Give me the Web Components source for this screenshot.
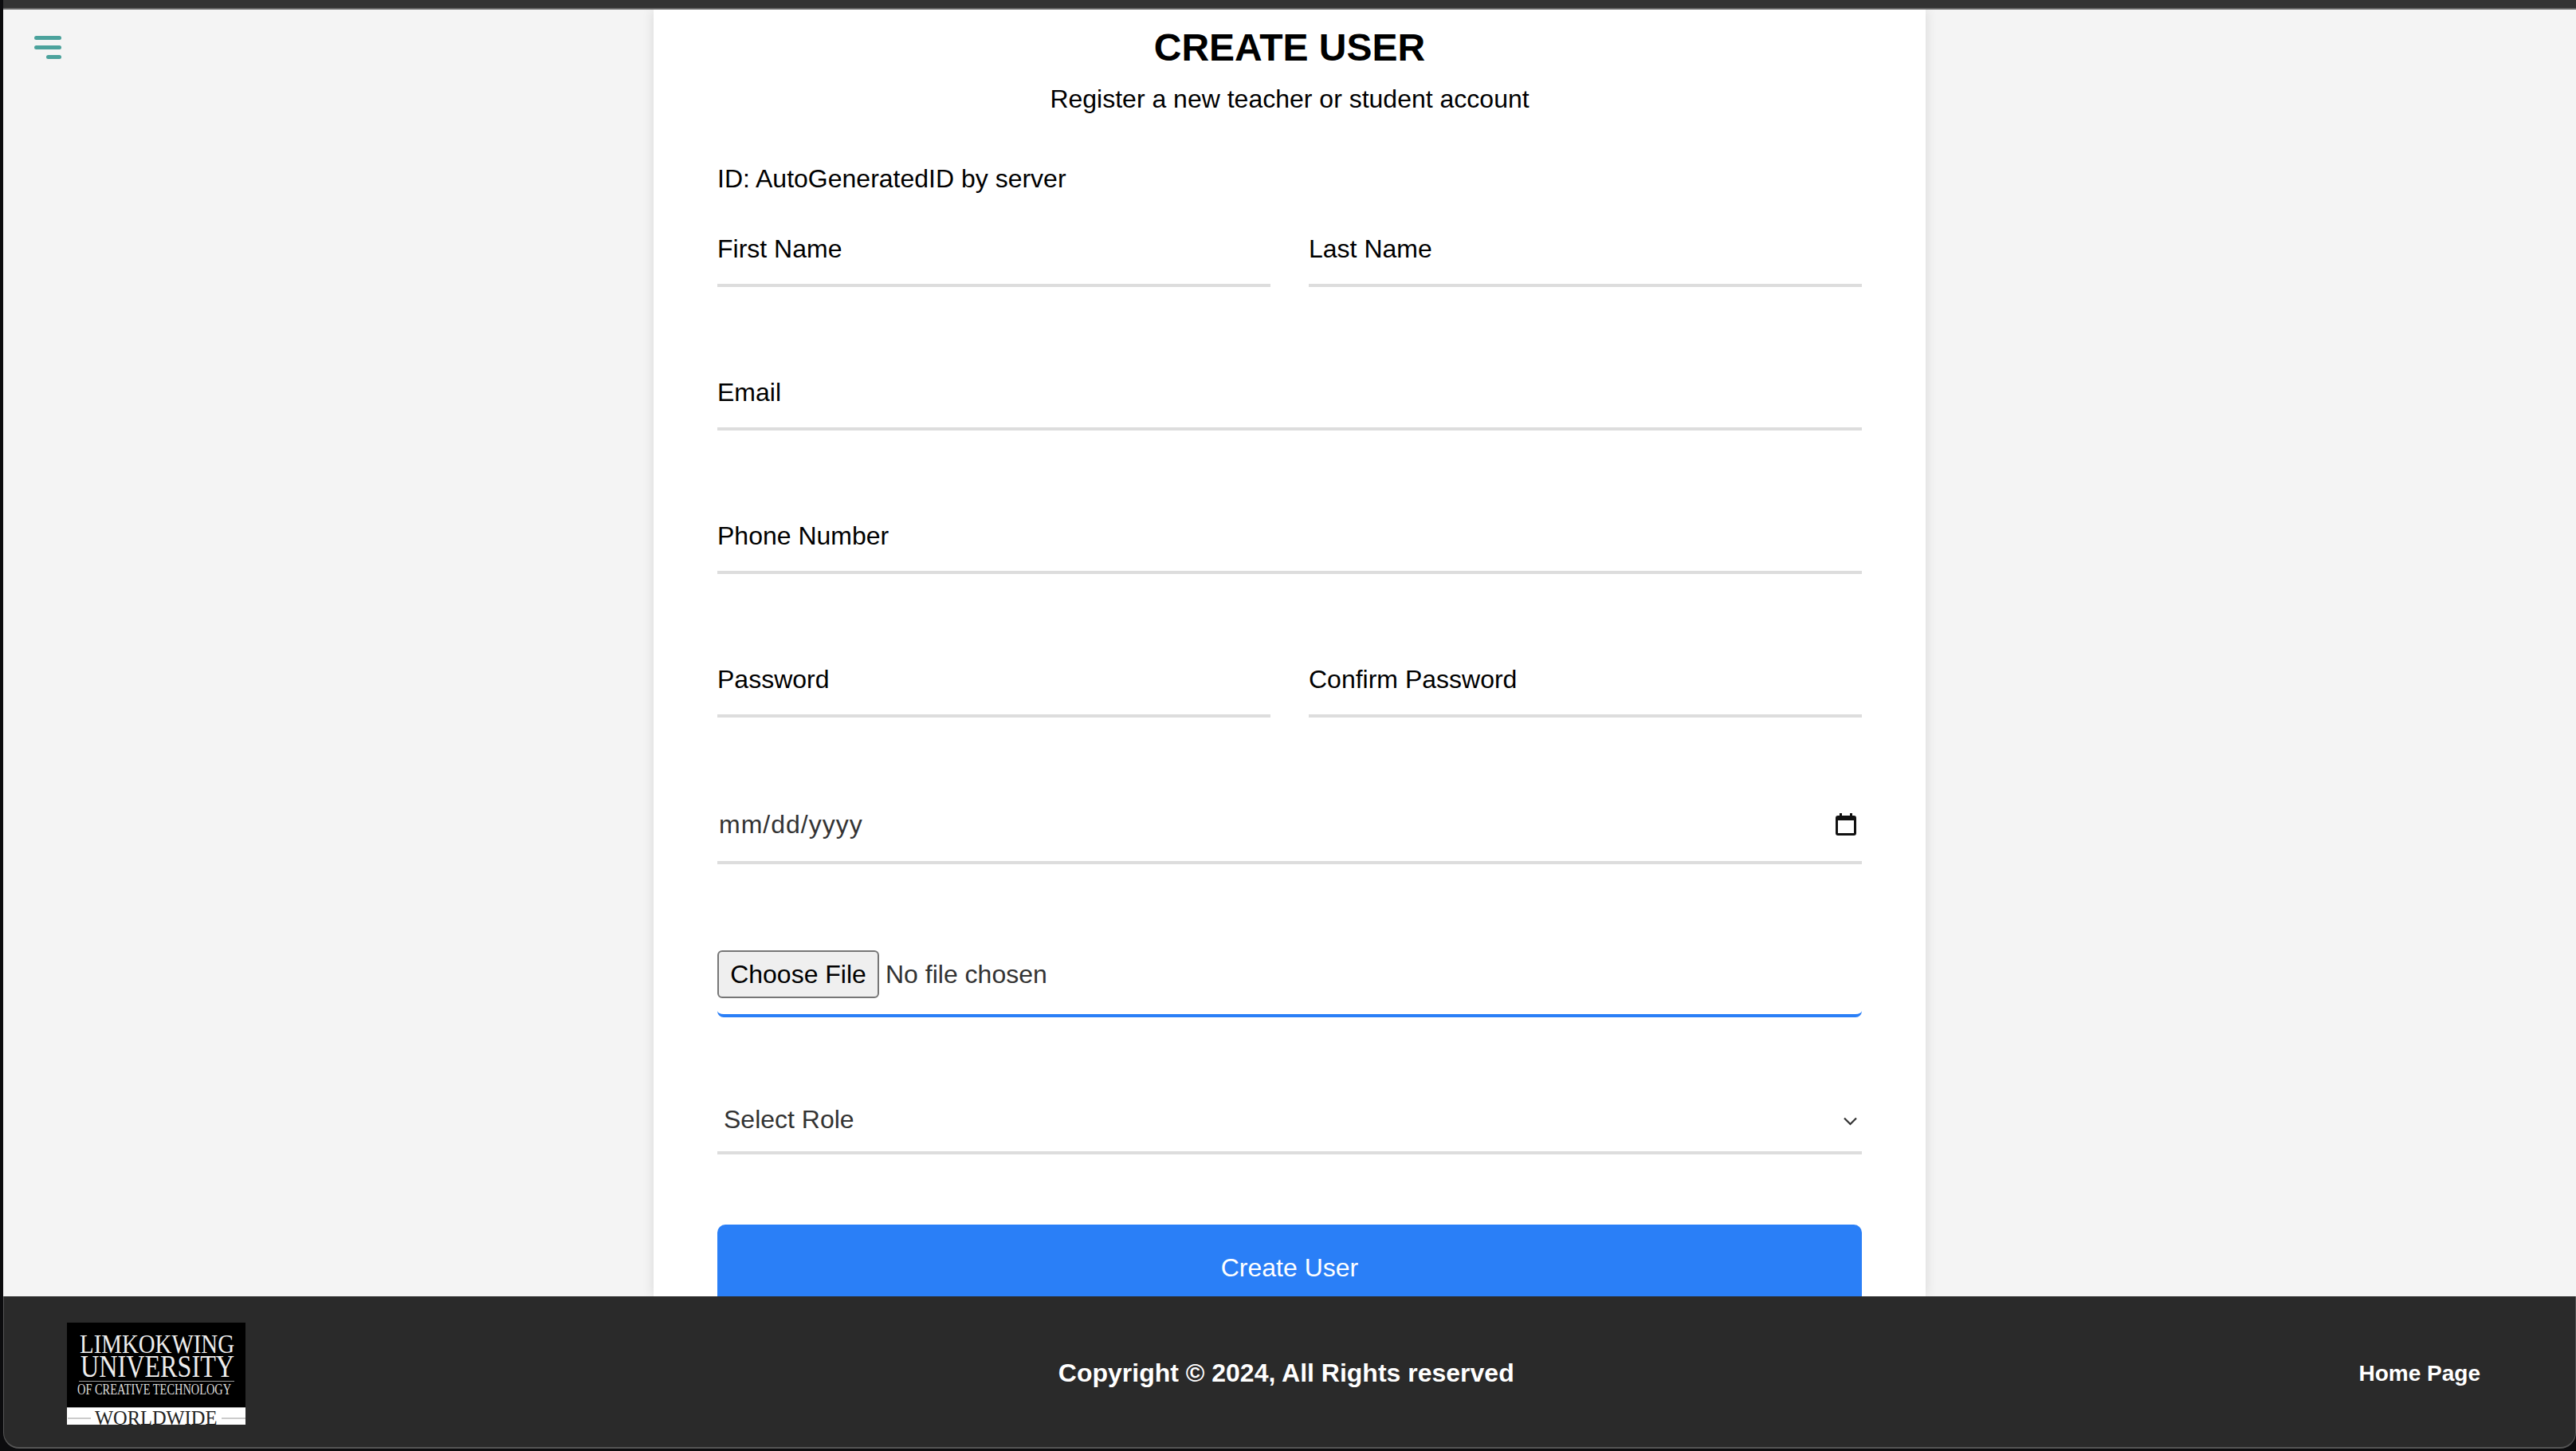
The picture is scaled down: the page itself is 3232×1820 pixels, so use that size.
<!DOCTYPE html>
<html>
<head>
<meta charset="utf-8">
<title>Create User</title>
<style>
html, body { margin: 0; height: 100%; background: #0c0c0e; }
body { font-family: "Liberation Sans", Arial, sans-serif; overflow: hidden; }
</style>
</head>
<body>
<app-shell>
  <menu-button slot="menu"></menu-button>
  <create-user-form>
    <form-row><text-field>First Name</text-field><text-field>Last Name</text-field></form-row>
    <form-row><text-field>Email</text-field></form-row>
    <form-row><text-field>Phone Number</text-field></form-row>
    <form-row><text-field>Password</text-field><text-field>Confirm Password</text-field></form-row>
    <form-row><date-field></date-field></form-row>
    <form-row><file-field></file-field></form-row>
    <form-row><select-field>Select Role</select-field></form-row>
  </create-user-form>
  <site-footer slot="footer"></site-footer>
</app-shell>

<script>
function component(name, css, html) {
  customElements.define(name, class extends HTMLElement {
    constructor() {
      super();
      this.attachShadow({ mode: 'open' });
      this.shadowRoot.innerHTML = '<style>' + css + '</style>' + html;
    }
  });
}

component('app-shell', `
  :host { display: flex; flex-direction: column; height: 1820px; box-sizing: border-box; padding: 0 0 3px 4px; }
  .bar { height: 10px; background: #333; flex: none; }
  .line { height: 2px; background: #666; flex: none; }
  main { flex: 1; min-height: 0; display: flex; justify-content: center; background: #f4f4f4; overflow: hidden; position: relative; }
  .menu { position: absolute; left: 39px; top: 33px; }
  .foot { flex: none; }
`, `
  <div class="bar"></div>
  <div class="line"></div>
  <main><div class="menu"><slot name="menu"></slot></div><slot></slot></main>
  <div class="foot"><slot name="footer"></slot></div>
`);

component('menu-button', `
  :host { display: block; width: 34px; height: 29px; }
  svg { display: block; }
`, `
  <svg width="34" height="29" viewBox="0 0 34 29" fill="#4ba29c">
    <rect x="0" y="0" width="34" height="5" rx="2.5"/>
    <rect x="0" y="12" width="34" height="5" rx="2.5"/>
    <rect x="15" y="24" width="19" height="5" rx="2.5"/>
  </svg>
`);

component('create-user-form', `
  :host { display: block; width: 1596px; flex: none; box-sizing: border-box; padding: 20px 80px 0; background: #fff; color: #000; box-shadow: 0 0 14px rgba(0,0,0,.12); }
  h1 { margin: 0; font-size: 48px; line-height: 56px; font-weight: 700; text-align: center; }
  p { margin: 17px 0 0; font-size: 32px; line-height: 38px; text-align: center; }
  .id { margin: 62px 0 0; text-align: left; }
  .fields { display: flex; flex-direction: column; margin-top: 25px; }
  .submit { display: block; margin-top: 88px; height: 108px; background: #2a7ff7; color: #fff; font-size: 32px; line-height: 108px; text-align: center; border-radius: 10px; }
`, `
  <h1>CREATE USER</h1>
  <p>Register a new teacher or student account</p>
  <p class="id">ID: AutoGeneratedID by server</p>
  <div class="fields"><slot></slot></div>
  <div class="submit">Create User</div>
`);

component('form-row', `
  :host { display: flex; gap: 48px; margin-bottom: 88px; }
  :host(:last-child) { margin-bottom: 0; }
`, `<slot></slot>`);

component('text-field', `
  :host { display: block; flex: 1; min-width: 0; height: 92px; box-sizing: border-box; padding-top: 24px; border-bottom: 4px solid #ddd; font-size: 32px; line-height: 40px; color: #000; }
`, `<slot></slot>`);

component('date-field', `
  :host { display: flex; flex: 1; align-items: center; justify-content: space-between; height: 96px; box-sizing: border-box; padding: 12px 7px 12px 2px; border-bottom: 4px solid #ddd; font-size: 32px; color: #333; }
  span { letter-spacing: 1px; }
  svg { display: block; }
`, `
  <span>mm/dd/yyyy</span>
  <svg width="26" height="28" viewBox="0 0 26 28">
    <path fill="#111" d="M5 0h3v3h10V0h3v3h2a3 3 0 0 1 3 3v19a3 3 0 0 1-3 3H3a3 3 0 0 1-3-3V6a3 3 0 0 1 3-3h2z"/>
    <rect x="3" y="9" width="20" height="16" fill="#fff"/>
  </svg>
`);

component('file-field', `
  :host { display: flex; flex: 1; align-items: center; gap: 8px; height: 104px; box-sizing: border-box; border-bottom: 4px solid #2a7ff7; border-radius: 0 0 8px 8px; font-size: 32px; color: #333; }
  button { width: 203px; height: 60px; padding: 0; box-sizing: border-box; background: #efefef; border: 2px solid #767676; border-radius: 6px; font: inherit; color: #000; }
`, `<button type="button">Choose File</button><span>No file chosen</span>`);

component('select-field', `
  :host { display: flex; flex: 1; align-items: center; justify-content: space-between; height: 84px; box-sizing: border-box; padding: 0 6px 0 8px; border-bottom: 4px solid #ddd; font-size: 32px; color: #333; }
  svg { display: block; margin-top: 5px; }
`, `
  <span><slot></slot></span>
  <svg width="17" height="11" viewBox="0 0 17 11" fill="none" stroke="#333" stroke-width="2.2"><path d="M1 1.5l7.5 7.5 7.5-7.5"/></svg>
`);

component('site-footer', `
  :host { display: flex; align-items: center; justify-content: space-between; height: 191px; box-sizing: border-box; padding: 4px 119px 0 79px; background: #2a2a2a; color: #fff; border: solid #555; border-width: 0 1px 2px 1px; border-radius: 0 0 20px 20px; }
  .copy { font-size: 32px; font-weight: 700; margin-right: 40px; }
  a { font-size: 28px; font-weight: 700; color: #fff; text-decoration: none; }
  svg { display: block; }
`, `
  <svg width="224" height="128" viewBox="0 0 224 128" font-family="'Liberation Serif', serif">
    <rect width="224" height="128" fill="#000"/>
    <text transform="translate(16 38) scale(.875 1)" font-size="33" fill="#eee">LIMKOKWING</text>
    <text transform="translate(17 68) scale(.825 1)" font-size="39" fill="#eee">UNIVERSITY</text>
    <rect x="15" y="73" width="195" height="1" fill="#999"/>
    <text transform="translate(13 90) scale(.8 1)" font-size="18" fill="#ddd">OF CREATIVE TECHNOLOGY</text>
    <rect y="106" width="224" height="22" fill="#fff"/>
    <rect y="106" width="224" height="1" fill="#aaa"/>
    <rect x="1" y="119" width="29" height="2" fill="#ccc"/>
    <rect x="194" y="119" width="30" height="2" fill="#ccc"/>
    <text transform="translate(35 128) scale(.94 1)" font-size="26" fill="#222">WORLDWIDE</text>
  </svg>
  <span class="copy">Copyright © 2024, All Rights reserved</span>
  <a href="#">Home Page</a>
`);
</script>
</body>
</html>
